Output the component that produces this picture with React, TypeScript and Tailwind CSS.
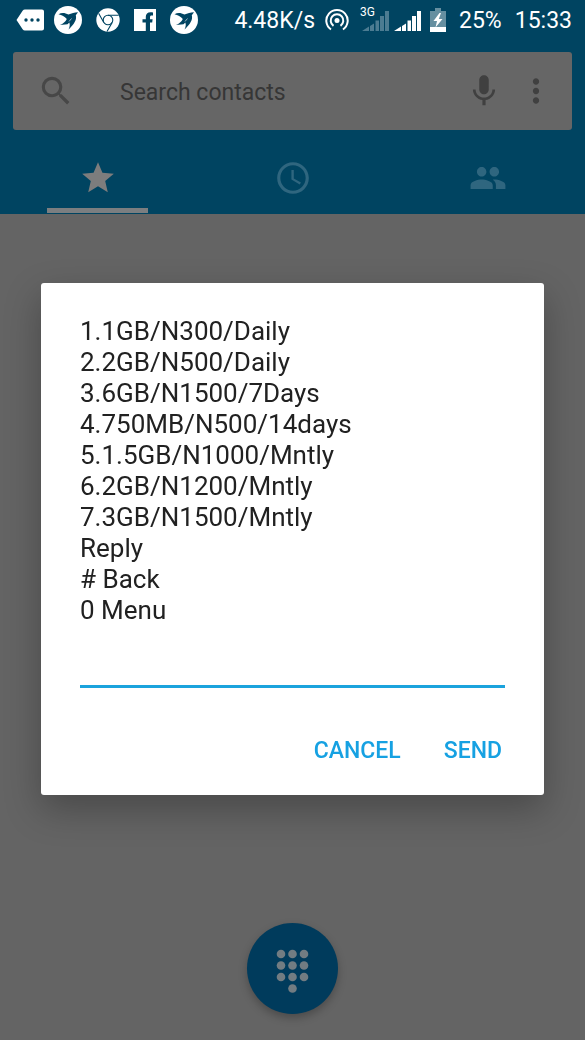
import React from 'react';
import {
  MdAccessTime,
  MdMic,
  MdMoreVert,
  MdPeople,
  MdSearch,
  MdStar,
} from 'react-icons/md';

const MENU_LINES = [
  '1.1GB/N300/Daily',
  '2.2GB/N500/Daily',
  '3.6GB/N1500/7Days',
  '4.750MB/N500/14days',
  '5.1.5GB/N1000/Mntly',
  '6.2GB/N1200/Mntly',
  '7.3GB/N1500/Mntly',
  'Reply',
  '# Back',
  '0 Menu',
];

const DIAL_DOTS = [
  [5, 5], [16.5, 5], [28, 5],
  [5, 16.5], [16.5, 16.5], [28, 16.5],
  [5, 28], [16.5, 28], [28, 28],
  [16.5, 39.5],
];

function TagIcon() {
  return (
    <svg viewBox="0 0 28 22" className="w-7 h-[22px]" aria-hidden="true">
      <path d="M9 0.5H26a2 2 0 0 1 2 2V19.500a2 2 0 0 1-2 2H9a3 3 0 0 1-2.400-1.200L0.500 11 6.600 1.700A3 3 0 0 1 9 .5z" fill="#fff" />
      <circle cx="10" cy="11" r="1.700" fill="#004461" />
      <circle cx="16" cy="11" r="1.700" fill="#004461" />
      <circle cx="22" cy="11" r="1.700" fill="#004461" />
    </svg>
  );
}

function BirdIcon() {
  return (
    <svg viewBox="0 0 28 28" className="w-7 h-7" aria-hidden="true">
      <circle cx="14" cy="14" r="14" fill="#fff" />
      <path
        d="M4.500 8.200C7.500 6.300 11 6.500 14.500 8.600 17.500 7 20.500 6.500 24 6.200L21.800 9.300C23 13.500 20.500 18 14.500 23.500 16 20.500 16 18.300 15.300 16.500L13.500 18.300 6 19C9 17.800 11.500 15.800 12.800 13 10.500 10.500 8 9 4.500 8.200z"
        fill="#004461"
      />
      <path d="M15 15.500 17.500 12.500" stroke="#fff" strokeWidth="0.600" />
    </svg>
  );
}

function ChromeIcon() {
  return (
    <svg viewBox="0 0 24 24" className="w-6 h-6" aria-hidden="true">
      <circle cx="12" cy="12" r="11.700" fill="#fff" />
      <g fill="none" stroke="#004461" strokeWidth="1.100">
        <circle cx="12" cy="12" r="4.800" />
        <path d="M12 7.200H22.700M7.800 14.400 2.600 5.300M16.200 14.400 11 23.600" />
      </g>
    </svg>
  );
}

function FacebookIcon() {
  return (
    <svg viewBox="0 0 22 22" className="w-[22px] h-[22px]" aria-hidden="true">
      <path d="M0 0h22v22h-6v-8.500h2.200l.4-3.200H16V8.200c0-1.200.5-1.700 1.600-1.700H19V3.400C18.500 3.200 17.500 3.200 16.600 3.200 13.500 3.200 11.800 5 11.800 7.700v2.600H8.500v3.200h3.300V22H0z" fill="#fff" />
    </svg>
  );
}

function HotspotIcon() {
  return (
    <svg viewBox="0 0 24 24" className="w-6 h-6" fill="none" stroke="#fff" strokeWidth="2" aria-hidden="true">
      <circle cx="12" cy="12.500" r="2.500" fill="#fff" stroke="none" />
      <path d="M6 21.500A10.700 10.700 0 1 1 18 21.500" />
      <path d="M8.500 17.800A6.300 6.300 0 1 1 15.500 17.800" />
    </svg>
  );
}

function SignalIcon({ color }: { color: string }) {
  return (
    <svg viewBox="0 0 27 21" className="w-[27px] h-[21px]" fill={color} aria-hidden="true">
      <path d="M0 21 7 16.500V21zM8 16l4-2.500V21H8zM13.500 10.500h3.500v10.500h-3.500zM18 6h4v15h-4zM23 1h4v20H23z" />
    </svg>
  );
}

function BatteryIcon() {
  return (
    <svg viewBox="0 0 16 24" className="w-4 h-6" aria-hidden="true">
      <path d="M5 0h6v3h5v16H0V3h5z" fill="#668fa0" />
      <path d="M0 19h16v5H0z" fill="#fff" />
      <path d="M9.500 5 3.500 13H7l-1.500 6.500L12.500 11H8.800L11 5z" fill="#fff" />
    </svg>
  );
}

function StatusBar() {
  return (
    <div className="flex h-10 items-center justify-between pl-4 pr-[13px] text-[23px] leading-7 text-white">
      <div className="flex items-center gap-[14px]">
        <div className="flex items-center gap-[10px]">
          <TagIcon />
          <BirdIcon />
        </div>
        <ChromeIcon />
        <div className="flex items-center gap-[14px]">
          <FacebookIcon />
          <BirdIcon />
        </div>
      </div>
      <div className="flex items-center gap-[13px]">
        <div className="flex items-center gap-[10px]">
          <span className="pt-0.5">4.48K/s</span>
          <HotspotIcon />
        </div>
        <div className="flex items-center gap-[9px]">
          <div className="flex items-center gap-[5px]">
            <div className="relative">
              <SignalIcon color="#4c7c92" />
              <span className="absolute -left-0.5 -top-1 bg-[#004461] text-[12px] leading-3">3G</span>
            </div>
            <SignalIcon color="#fff" />
          </div>
          <BatteryIcon />
        </div>
        <span className="pt-0.5">25%</span>
        <span className="pt-0.5">15:33</span>
      </div>
    </div>
  );
}

function SearchBar() {
  return (
    <div className="mx-[13px] mt-3 flex h-[78px] items-center rounded-[3px] bg-[#666666] pl-6 pr-[17px] text-[#404040]">
      <MdSearch className="size-[38px] shrink-0 text-[#474747]" aria-hidden="true" />
      <input
        type="text"
        aria-label="Search contacts"
        placeholder="Search contacts"
        className="ml-[45px] min-w-0 flex-1 bg-transparent pt-[3px] text-[23px] leading-7 outline-none placeholder:text-[#363636]"
      />
      <button type="button" aria-label="Voice search">
        <MdMic className="size-[38px]" />
      </button>
      <button type="button" aria-label="More options" className="ml-[14px]">
        <MdMoreVert className="size-[38px]" />
      </button>
    </div>
  );
}

function Tabs() {
  return (
    <nav className="grid h-[84px] grid-cols-3 text-[#2f667f]">
      <button type="button" aria-label="Favourites" className="flex flex-col items-center justify-end pb-px text-[#7d7d7d]">
        <MdStar className="size-[38px]" />
        <span className="mt-[11px] h-[5px] w-[101px] bg-[#7b7e80]" />
      </button>
      <button type="button" aria-label="Recent calls" className="flex items-center justify-center pt-3">
        <MdAccessTime className="size-[38px]" />
      </button>
      <button type="button" aria-label="Contacts" className="flex items-center justify-center pt-3">
        <MdPeople className="size-[38px]" />
      </button>
    </nav>
  );
}

function ReplyDialog() {
  return (
    <div className="fixed inset-0 flex items-center justify-center px-[41px] pt-[38px]">
      <div
        role="dialog"
        aria-modal="true"
        aria-labelledby="ussd-message"
        className="w-full rounded-[3px] bg-white pt-[33px] pb-[15px] shadow-[0_14px_36px_rgba(0,0,0,0.28)]"
      >
        <div className="px-[39px]">
          <p id="ussd-message" className="whitespace-pre-line text-[26px] leading-[31px] text-[#212121]">
            {MENU_LINES.join('\n')}
          </p>
          <input
            type="text"
            aria-label="Reply"
            className="block h-[62px] w-full border-b-[3px] border-[#1ba3dd] bg-transparent pt-6 text-[26px] text-[#212121] outline-none"
          />
        </div>
        <div className="mt-8 flex justify-end gap-[3px] pr-[22px] text-[23px] font-medium text-[#16a1e2]">
          <button type="button" className="h-[60px] px-5 pt-0.5">CANCEL</button>
          <button type="button" className="h-[60px] px-5 pt-0.5">SEND</button>
        </div>
      </div>
    </div>
  );
}

export default function App() {
  return (
    <div className="flex min-h-screen flex-col bg-[#646464] font-['Roboto',sans-serif]">
      <header className="bg-[#004461]">
        <StatusBar />
        <SearchBar />
        <Tabs />
      </header>
      <main className="flex flex-1 items-end justify-center pb-[26px]">
        <button
          type="button"
          aria-label="Open dial pad"
          className="flex size-[91px] items-center justify-center rounded-full bg-[#003b5c] shadow-[0_4px_8px_rgba(0,0,0,0.25)]"
        >
          <svg viewBox="0 0 33 44" className="mt-1 h-11 w-[33px]" fill="#727c82" aria-hidden="true">
            {DIAL_DOTS.map(([cx, cy]) => (
              <circle key={`${cx}-${cy}`} cx={cx} cy={cy} r="4.300" />
            ))}
          </svg>
        </button>
      </main>
      <ReplyDialog />
    </div>
  );
}
